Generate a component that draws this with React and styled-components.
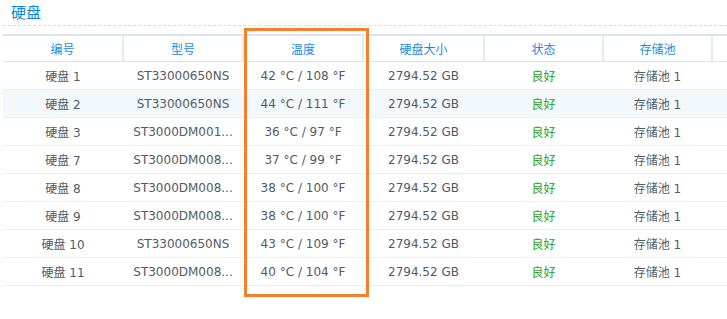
import styled, { createGlobalStyle } from 'styled-components'

const GlobalStyle = createGlobalStyle`
  body {
    margin: 0;
    background: #fff;
    font-family: "DejaVu Sans", "Noto Sans CJK SC", sans-serif;
  }
`

const disks = [
  { id: '硬盘 1', model: 'ST33000650NS', temp: '42 °C / 108 °F' },
  { id: '硬盘 2', model: 'ST33000650NS', temp: '44 °C / 111 °F' },
  { id: '硬盘 3', model: 'ST3000DM001...', temp: '36 °C / 97 °F' },
  { id: '硬盘 7', model: 'ST3000DM008...', temp: '37 °C / 99 °F' },
  { id: '硬盘 8', model: 'ST3000DM008...', temp: '38 °C / 100 °F' },
  { id: '硬盘 9', model: 'ST3000DM008...', temp: '38 °C / 100 °F' },
  { id: '硬盘 10', model: 'ST33000650NS', temp: '43 °C / 109 °F' },
  { id: '硬盘 11', model: 'ST3000DM008...', temp: '40 °C / 104 °F' },
]

const columns = ['编号', '型号', '温度', '硬盘大小', '状态', '存储池']
const widths = [120, 120, 120, 121, 119, 109]

export default function App() {
  return (
    <Page>
      <GlobalStyle />
      <Title>硬盘</Title>
      <Divider />
      <TableWrap>
        <Table>
          <colgroup>
            {widths.map((w, i) => <col key={i} style={{ width: w }} />)}
            <col />
          </colgroup>
          <thead>
            <tr>
              {columns.map(c => <Th key={c}>{c}</Th>)}
              <Th />
            </tr>
          </thead>
          <tbody>
            {disks.map((d, i) => (
              <Row key={d.id} $alt={i === 1}>
                <Td>{d.id}</Td>
                <Td>{d.model}</Td>
                <Td>{d.temp}</Td>
                <Td>2794.52 GB</Td>
                <Td $good>良好</Td>
                <Td>存储池 1</Td>
                <Td />
              </Row>
            ))}
          </tbody>
        </Table>
        <Highlight />
      </TableWrap>
    </Page>
  )
}

const Page = styled.div`
  width: 727px;
  height: 319px;
  overflow: hidden;
  position: relative;
`

const Title = styled.div`
  height: 25px;
  padding-left: 11px;
  font-family: "Noto Sans CJK SC", sans-serif;
  font-size: 15px;
  line-height: 24px;
  color: #0b86e0;
`

const Divider = styled.div`
  margin-left: 3px;
  border-top: 1px dashed #d3dbe4;
`

const TableWrap = styled.div`
  position: relative;
  margin-top: 8px;
  margin-left: 3px;
`

const Table = styled.table`
  width: 724px;
  border-collapse: collapse;
  table-layout: fixed;
  font-size: 12px;
`

const Th = styled.th`
  height: 25px;
  padding: 0;
  border-top: 2px solid #dbe4ee;
  border-bottom: 1px solid #dbe4ee;
  border-right: 2px solid #e3eaf2;
  font-weight: normal;
  color: #1a8be3;
  text-align: center;
  &:last-child { border-right: none; }
`

const Row = styled.tr`
  background: ${p => (p.$alt ? '#f3f8fd' : '#fff')};
`

const Td = styled.td`
  height: 27px;
  padding: 0;
  border-bottom: 1px solid #ebeef2;
  text-align: center;
  white-space: nowrap;
  color: ${p => (p.$good ? '#2aa01c' : '#515b66')};
`

const Highlight = styled.div`
  position: absolute;
  left: 241px;
  top: -6px;
  width: 119px;
  height: 263px;
  border: 3px solid #f57f2a;
  pointer-events: none;
`
